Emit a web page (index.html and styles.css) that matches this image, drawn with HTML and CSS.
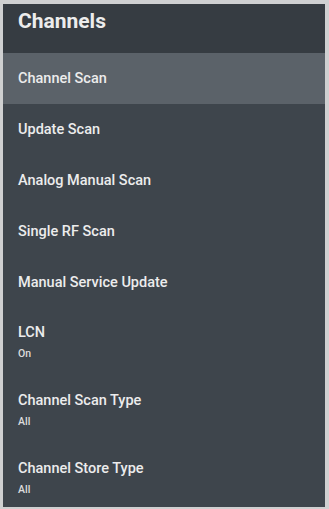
FILE: index.html
```html
<!DOCTYPE html>
<html>
<head>
<meta charset="utf-8">
<link rel="stylesheet" href="styles.css">
</head>
<body>
<div class="panel">
  <div class="header">Channels</div>
  <ul class="menu">
    <li class="item selected"><span class="title">Channel Scan</span></li>
    <li class="item"><span class="title">Update Scan</span></li>
    <li class="item"><span class="title">Analog Manual Scan</span></li>
    <li class="item"><span class="title">Single RF Scan</span></li>
    <li class="item"><span class="title">Manual Service Update</span></li>
    <li class="item double"><span class="title">LCN</span><span class="sub">On</span></li>
    <li class="item double"><span class="title">Channel Scan Type</span><span class="sub">All</span></li>
    <li class="item double"><span class="title">Channel Store Type</span><span class="sub">All</span></li>
  </ul>
</div>
</body>
</html>
```
FILE: styles.css
```css
html, body {
  margin: 0;
  padding: 0;
  background: #cfd0d1;
  height: 509px;
  overflow: hidden;
}
.panel {
  margin: 4px 4px 0 3px;
  height: 503px;
  background: #3e454c;
  font-family: Roboto, "Noto Sans", sans-serif;
  color: #ececec;
  overflow: hidden;
}
.header {
  height: 49px;
  background: #363c42;
  font-size: 21px;
  font-weight: 700;
  padding-left: 15px;
  line-height: 34px;
  box-sizing: border-box;
}
.menu {
  list-style: none;
  margin: 0;
  padding: 0;
}
.item {
  height: 51px;
  display: flex;
  flex-direction: column;
  justify-content: center;
  padding-left: 15px;
  box-sizing: border-box;
}
.item.selected {
  background: #5b6269;
}
.item.double {
  height: 68px;
  justify-content: flex-start;
  padding-top: 17px;
}
.title {
  font-size: 14.5px;
  font-weight: 500;
  line-height: 16px;
}
.sub {
  font-size: 10.5px;
  font-weight: 500;
  line-height: 12px;
  margin-top: 7px;
  color: #dcdcdc;
}
```
